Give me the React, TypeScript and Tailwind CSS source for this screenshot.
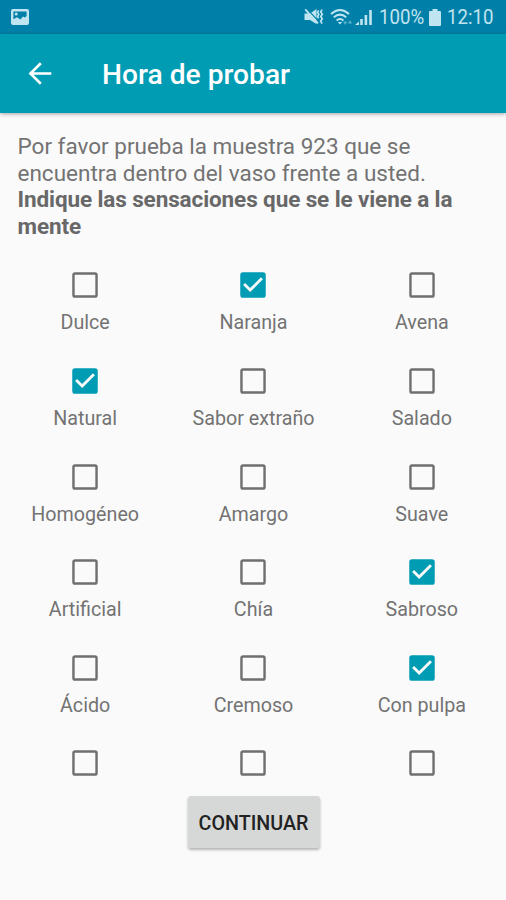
interface Sensation {
  label: string;
  checked?: boolean;
}

const sensations: Sensation[] = [
  { label: "Dulce" },
  { label: "Naranja", checked: true },
  { label: "Avena" },
  { label: "Natural", checked: true },
  { label: "Sabor extraño" },
  { label: "Salado" },
  { label: "Homogéneo" },
  { label: "Amargo" },
  { label: "Suave" },
  { label: "Artificial" },
  { label: "Chía" },
  { label: "Sabroso", checked: true },
  { label: "Ácido" },
  { label: "Cremoso" },
  { label: "Con pulpa", checked: true },
  { label: "" },
  { label: "" },
  { label: "" },
];

function StatusBar() {
  return (
    <div className="flex h-[34px] shrink-0 items-center bg-[#0080a9] pr-[12px] pl-[11px] text-[#c0e4f0]">
      <svg width="18" height="16" viewBox="0 0 18 16" fill="currentColor">
        <path
          fillRule="evenodd"
          d="M2 0h14a2 2 0 0 1 2 2v12a2 2 0 0 1-2 2H2a2 2 0 0 1-2-2V2a2 2 0 0 1 2-2zM2.4 2.4v7.8l3.6-2 3.4 2.4 2.6-3 2 .8 1.6-1.4V2.4zM5.2 3.6a1.5 1.5 0 1 1 0 3 1.5 1.5 0 0 1 0-3z"
        />
      </svg>
      <div className="ml-auto flex items-center">
        <svg width="20" height="18" viewBox="0 0 20 18" fill="currentColor">
          <path d="M0.5 5.5H6l6.5-4.5v15L6 12H0.5z" />
          <path
            d="M3.4 1.4l10 10.6"
            fill="none"
            stroke="#0080a9"
            strokeWidth="1.1"
          />
          <path
            d="M1.2 1.4L14 15.4"
            fill="none"
            stroke="currentColor"
            strokeWidth="1.8"
          />
          <path
            d="M14.6 2.4l-1 2 1.2 2.1-1.2 2.1 1 1.8M18 1.6l-1.3 2.3 1.6 2.3-1.6 2.3 1.6 2.3-1.6 2.3L18 15.6"
            fill="none"
            stroke="currentColor"
            strokeWidth="1.7"
          />
        </svg>
        <svg
          className="ml-[6px]"
          width="23"
          height="18"
          viewBox="0 0 23 18"
          fill="none"
          stroke="currentColor"
          strokeWidth="2"
        >
          <path d="M1 6q9-8 18 0M3.8 9.3q6.2-5.4 12.4 0M6.6 12.4q3.4-2.8 6.8 0" />
          <path d="M7.8 14l2.2 2.4 2.2-2.4z" fill="currentColor" stroke="none" />
          <path
            d="M13 13.5h4.4l-2.2 3.5zM17.8 15.5h4.4L20 12z"
            fill="currentColor"
            stroke="none"
            opacity="0.45"
          />
        </svg>
        <svg
          className="ml-[2px]"
          width="18"
          height="18"
          viewBox="0 0 18 18"
          fill="currentColor"
        >
          <path d="M0 17l4-3.5V17zM5.2 11h2.6v6H5.2zM9.6 7h2.6v10H9.6zM14.2 2h2.6v15h-2.6z" />
        </svg>
        <span className="ml-[6px] w-[45px] text-[21px] leading-none whitespace-nowrap">
          <span className="inline-block origin-left scale-x-[0.89]">100%</span>
        </span>
        <svg
          className="ml-[5px]"
          width="12"
          height="17"
          viewBox="0 0 12 17"
          fill="currentColor"
        >
          <path d="M3.5 0h5v2H11a1 1 0 0 1 1 1v13a1 1 0 0 1-1 1H1a1 1 0 0 1-1-1V3a1 1 0 0 1 1-1h2.5z" />
        </svg>
        <span className="ml-[6px] w-[47px] text-[21px] leading-none whitespace-nowrap">
          <span className="inline-block origin-left scale-x-[0.89]">12:10</span>
        </span>
      </div>
    </div>
  );
}

function Toolbar() {
  return (
    <header className="z-10 flex h-[79px] shrink-0 items-center bg-[#009cb4] pl-[23px] text-white shadow-[0_1px_4px_rgba(0,0,0,0.35)]">
      <button type="button" aria-label="Volver">
        <svg
          width="34"
          height="34"
          viewBox="0 0 34 34"
          fill="none"
          stroke="currentColor"
          strokeWidth="2.6"
        >
          <path d="M28.3 16.5H7.5M17.8 6.3L7.4 16.5l10.4 10.2" />
        </svg>
      </button>
      <h1 className="ml-[45px] pt-[4px] text-[28.2px] leading-none font-medium">
        Hora de probar
      </h1>
    </header>
  );
}

function CheckItem({ label, checked }: Sensation) {
  return (
    <label className="flex h-[95.6px] flex-col items-center">
      <svg width="34" height="34" viewBox="0 0 24 24">
        {checked ? (
          <path
            fill="#009cb4"
            d="M19 3H5a2 2 0 0 0-2 2v14a2 2 0 0 0 2 2h14a2 2 0 0 0 2-2V5a2 2 0 0 0-2-2zm-9 14l-5-5 1.41-1.41L10 14.17l7.59-7.59L19 8z"
          />
        ) : (
          <path
            fill="#6f6f6f"
            d="M19 4.7a.3.3 0 0 1 .3.3v14a.3.3 0 0 1-.3.3H5a.3.3 0 0 1-.3-.3V5a.3.3 0 0 1 .3-.3h14M19 3H5a2 2 0 0 0-2 2v14a2 2 0 0 0 2 2h14a2 2 0 0 0 2-2V5a2 2 0 0 0-2-2z"
            fillRule="evenodd"
          />
        )}
      </svg>
      <span className="mt-[9px] text-[19.7px] leading-6">{label}</span>
    </label>
  );
}

export default function App() {
  return (
    <div className="flex h-[900px] w-[506px] flex-col overflow-hidden bg-[#fafafa] font-[Roboto,sans-serif] text-[#737373]">
      <StatusBar />
      <Toolbar />
      <p className="mt-5 shrink-0 pl-[17.5px] text-[22.5px] leading-[26.7px]">
        Por favor prueba la muestra 923 que se
        <br />
        encuentra dentro del vaso frente a usted.
        <br />
        <b className="font-bold tracking-[-0.11px] text-[#686868]">
          Indique las sensaciones que se le viene a la
          <br />
          mente
        </b>
      </p>
      <div className="mt-[28.5px] grid h-[515px] w-[506px] shrink-0 grid-cols-3 overflow-hidden pl-px">
        {sensations.map((item, i) => (
          <CheckItem key={i} {...item} />
        ))}
      </div>
      <button
        type="button"
        className="mt-[13px] ml-px h-[52px] w-[132px] shrink-0 self-center rounded-[3px] bg-[#d6d8d7] pt-[2px] text-[19.7px] font-medium text-[#222] shadow-[0_2px_3px_rgba(0,0,0,0.28)]"
      >
        CONTINUAR
      </button>
    </div>
  );
}
